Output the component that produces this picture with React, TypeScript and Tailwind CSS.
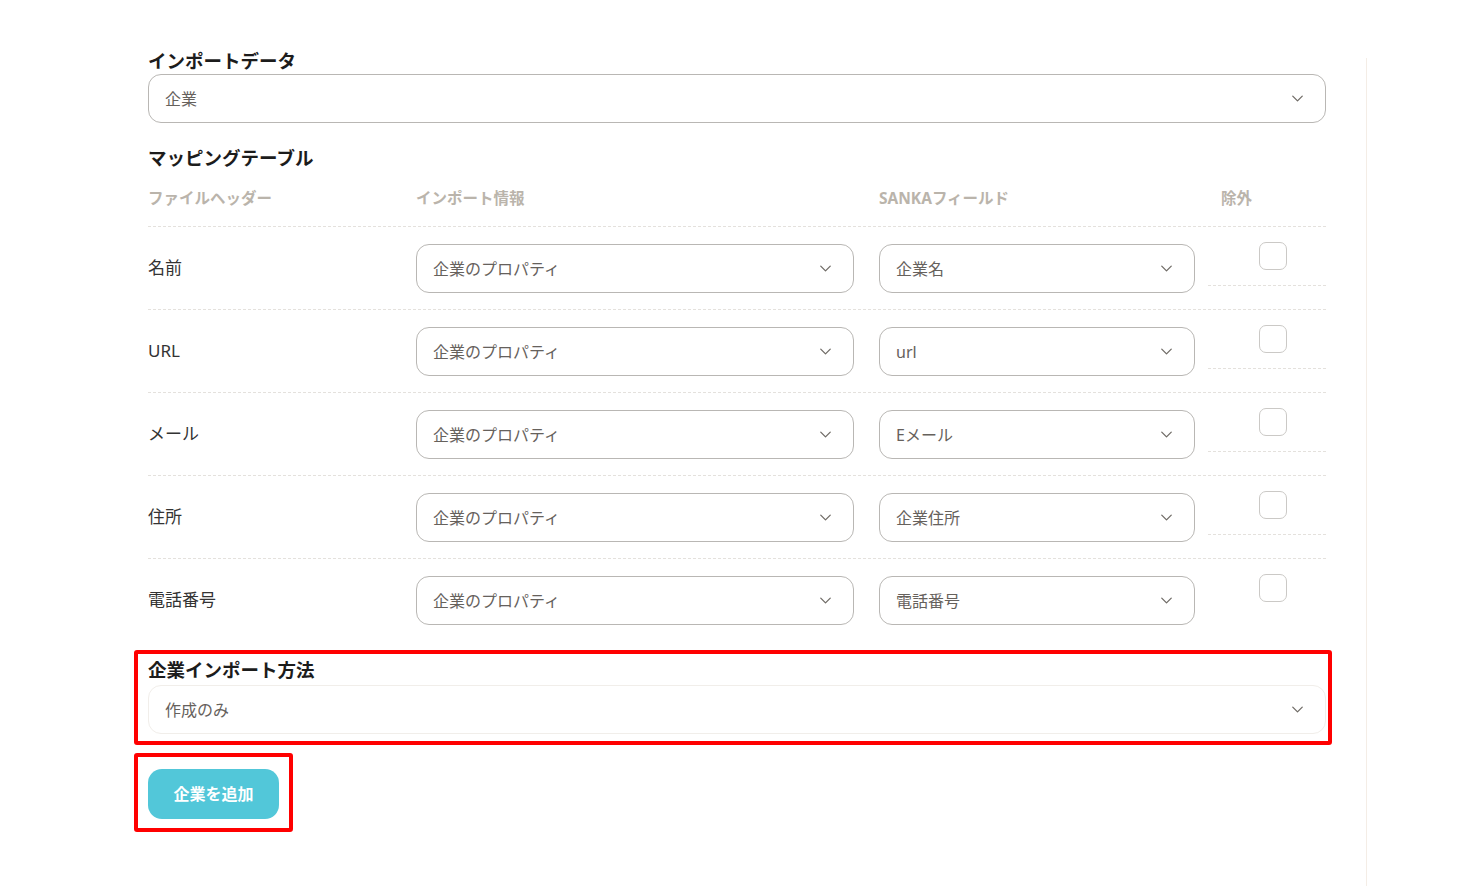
import { ChevronDown } from 'lucide-react';

const font = { fontFamily: '"Noto Sans", "Noto Sans CJK JP", sans-serif' };

interface SelectBoxProps {
  value: string;
  className?: string;
  light?: boolean;
}

const SelectBox = ({ value, className = '', light = false }: SelectBoxProps) => (
  <div
    className={`flex h-[49px] items-center justify-between rounded-[13px] border bg-white pl-[16px] pr-[18px] ${
      light ? 'border-[#f1eeea]' : 'border-[#b9b7b4]'
    } ${className}`}
  >
    <span className="text-[16px] text-[#66615c]">{value}</span>
    <ChevronDown size={19} strokeWidth={1.6} className="text-[#6f6b66]" />
  </div>
);

const rows = [
  { label: '名前', field: '企業名' },
  { label: 'URL', field: 'url' },
  { label: 'メール', field: 'Eメール' },
  { label: '住所', field: '企業住所' },
  { label: '電話番号', field: '電話番号' }
];

const App = () => {
  return (
    <div className="flex min-h-[886px] bg-white" style={font}>
      <div className="ml-[148px] w-[1178px] pt-[47px]">
        <h2 className="text-[18.5px] font-bold leading-[27px] text-[#1c1c1c]">インポートデータ</h2>
        <SelectBox value="企業" />

        <h2 className="mt-[21px] text-[18.5px] font-bold leading-[27px] text-[#1c1c1c]">マッピングテーブル</h2>

        <div className="flex h-[56px] items-center border-b border-dashed border-[#e4e1dd] text-[15.5px] font-bold text-[#bab4ab]">
          <div className="w-[268px]">ファイルヘッダー</div>
          <div className="w-[463px]">インポート情報</div>
          <div className="w-[329px]">SANKAフィールド</div>
          <div className="pl-[13px]">除外</div>
        </div>

        {rows.map((row, i) => (
          <div
            key={row.label}
            className={`flex items-start ${i < rows.length - 1 ? 'border-b border-dashed border-[#e4e1dd]' : ''}`}
          >
            <div className="flex h-[82px] w-[268px] items-center text-[17px] text-[#333]">{row.label}</div>
            <div className="w-[438px] pt-[17px]">
              <SelectBox value="企業のプロパティ" />
            </div>
            <div className="ml-[25px] w-[316px] pt-[17px]">
              <SelectBox value={row.field} />
            </div>
            <div
              className={`ml-[13px] w-[118px] pl-[51px] pt-[15px] pb-[15px] ${
                i < rows.length - 1 ? 'border-b border-dashed border-[#e4e1dd]' : ''
              }`}
            >
              <div className="h-[28px] w-[28px] rounded-[7px] border-[1.5px] border-[#cbc9c6] bg-white" />
            </div>
          </div>
        ))}

        <div className="mt-[9px] ml-[-14px] mr-[-6px] rounded-[3px] border-4 border-[#ff0000] pl-[10px] pr-[2px] pt-[2px] pb-[7px]">
          <h2 className="mb-[2px] text-[18.5px] font-bold leading-[27px] text-[#1c1c1c]">企業インポート方法</h2>
          <SelectBox value="作成のみ" light />
        </div>

        <div className="mt-[8px] ml-[-14px] inline-block rounded-[3px] border-4 border-[#ff0000] px-[10px] pt-[12px] pb-[9px]">
          <button className="flex h-[50px] w-[131px] items-center justify-center rounded-[14px] bg-[#52c7d9] text-[16px] font-bold text-white">
            企業を追加
          </button>
        </div>
      </div>
      <div className="ml-[40px] mt-[58px] w-px bg-[#f4ede6]" />
    </div>
  );
};

export default App;
